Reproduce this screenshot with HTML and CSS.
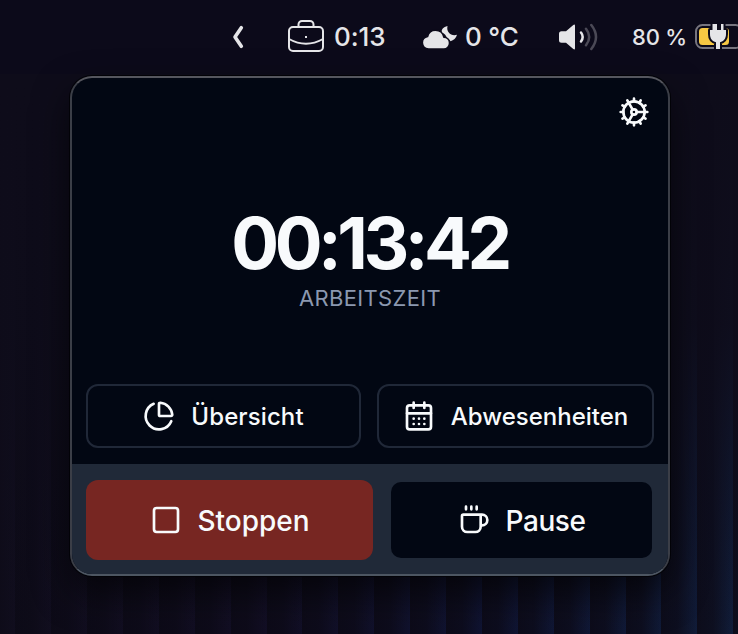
FILE: index.html
```html
<!DOCTYPE html>
<html lang="de">
<head>
<meta charset="utf-8">
<title>Arbeitszeit</title>
<link rel="stylesheet" href="styles.css">
</head>
<body>
<header class="menubar">
  <svg class="chevron" width="12" height="24" viewBox="0 0 12 24"><path d="M9.300 2.700 3 12l6.300 9.300"/></svg>
  <div class="item work">
    <svg class="line" width="38" height="36" viewBox="0 0 38 36"><rect x="2" y="9" width="34" height="24" rx="4"/><path d="M11.500 9V6.500a3.500 3.500 0 0 1 3.500-3.500h8a3.500 3.500 0 0 1 3.500 3.500V9M2 21q17 9.500 34 0"/><rect class="solid" x="18" y="18" width="2" height="2"/></svg>
    <span class="work-text">0:13</span>
  </div>
  <div class="item weather">
    <svg class="fill" width="36" height="26" viewBox="0 0 36 26"><path d="M25.500 2c-4 .8-6.700 3.500-5.500 6.700 2.500.8 4.400 2.800 5 5.700 1.500.4 2.800 1.400 3.500 2.900 3-1 5.700-3.300 6.500-6.600-5.500 1.800-11-2.300-9.500-8.700z"/><path class="cloud" d="M6.500 25a6.300 6.300 0 0 1-.9-12.500C6.500 8.500 9.700 6.200 13.500 6.200c4.300 0 7.500 2.900 8.300 7 3.100-.1 5.700 2.500 5.700 5.700 0 3.300-2.500 6.100-5.700 6.100z"/></svg>
    <span class="weather-text">0 °C</span>
  </div>
  <svg class="speaker" width="42" height="30" viewBox="0 0 42 30"><path class="cone" d="M3.500 9.300H8L15.300 3q1.700-1.200 1.700.8v22.400q0 2-1.700.8L8 20.700H3.500Q1 20.700 1 18.200v-6.400Q1 9.300 3.500 9.300z"/><path d="M23 10.500q3.400 4.500 0 9"/><path class="dim" d="M28 6.800q6.400 8.200 0 16.400M33.300 3q9.400 12 0 24"/></svg>
  <span class="charge">80 %</span>
  <svg class="battery" width="50" height="30" viewBox="0 0 50 30"><rect class="case" x="2" y="3" width="46" height="23" rx="6.500"/><rect class="level" x="5" y="6" width="30" height="17" rx="3.500"/><path class="plug" d="M18.500 2v6h-2.500v4c0 4.700 2.300 7.200 6 8.200V27h4v-6.800c3.700-1 6-3.500 6-8.200V8h-2.500V2h-2.500v6h-4V2z"/></svg>
</header>
<main class="desktop">
  <section class="panel">
    <div class="top">
      <svg class="icon" viewBox="0 0 24 24"><circle cx="12" cy="12" r="8"/><circle cx="12" cy="12" r="2"/><path d="M12 2v2M12 22v-2M17 20.660l-1-1.730M11 10.270 7 3.340M20.660 17l-1.730-1M3.340 7l1.730 1M14 12h8M2 12h2M20.660 7l-1.730 1M3.340 17l1.730-1M17 3.340l-1 1.730M11 13.730l-4 6.930"/></svg>
    </div>
    <div class="timer">
      <div class="time">00:13:42</div>
      <div class="caption">ARBEITSZEIT</div>
    </div>
    <div class="links">
      <button class="btn overview"><svg class="icon" viewBox="0 0 24 24"><path d="M21 12c.552 0 1.005-.449.950-.998a10 10 0 0 0-8.953-8.951c-.550-.055-.998.398-.998.950v8a1 1 0 0 0 1 1z"/><path d="M21.210 15.890A10 10 0 1 1 8 2.830"/></svg><span>Übersicht</span></button>
      <button class="btn absences"><svg class="icon" viewBox="0 0 24 24"><path d="M8 2v4M16 2v4M3 10h18M8 14h.01M12 14h.01M16 14h.01M8 18h.01M12 18h.01M16 18h.01"/><rect x="3" y="4" width="18" height="18" rx="2"/></svg><span>Abwesenheiten</span></button>
    </div>
    <footer class="actions">
      <button class="btn stop"><svg class="icon" viewBox="0 0 24 24"><rect x="3" y="3" width="18" height="18" rx="2"/></svg><span>Stoppen</span></button>
      <button class="btn pause"><svg class="icon" viewBox="0 0 24 24"><path d="M6 2v2M10 2v2M14 2v2M16 8a1 1 0 0 1 1 1v8a4 4 0 0 1-4 4H7a4 4 0 0 1-4-4V9a1 1 0 0 1 1-1h14a4 4 0 1 1 0 8h-1"/></svg><span>Pause</span></button>
    </footer>
  </section>
</main>
</body>
</html>
```
FILE: styles.css
```css
* { box-sizing: border-box; }
body {
  margin: 0;
  width: 738px;
  height: 634px;
  overflow: hidden;
  background: #0d0b1a;
  color: #f8fafc;
  font-family: Inter, "Liberation Sans", sans-serif;
}
svg { display: block; flex: none; fill: none; stroke-linecap: round; stroke-linejoin: round; }
.menubar {
  display: flex;
  align-items: center;
  height: 74px;
  padding-left: 232px;
  background: #0c0a1a;
  color: #e5e5e8;
  font-size: 26px;
  font-weight: 500;
  white-space: nowrap;
}
.item { display: flex; align-items: center; }
.chevron { stroke: #e5e5e8; stroke-width: 3.6; }
.work { margin-left: 43px; gap: 9px; }
.line { stroke: #e5e5e8; stroke-width: 2; margin-top: -3px; }
.solid { fill: #e5e5e8; stroke: none; }
.work-text { width: 52px; padding-bottom: 2px; letter-spacing: -0.1px; }
.weather { margin-left: 36px; gap: 7px; }
.fill { fill: #e5e5e8; }
.cloud { stroke: #0c0a1a; stroke-width: 1.5; }
.weather-text { width: 55px; padding-bottom: 2px; letter-spacing: -0.2px; }
.speaker { margin-left: 38px; stroke: #e5e5e8; stroke-width: 2.5; }
.cone { fill: #e5e5e8; stroke: none; }
.dim { stroke: #4b4956; }
.charge { margin-left: 32px; width: 55px; font-size: 22px; letter-spacing: -0.2px; }
.battery { margin-left: 7px; }
.case { stroke: #77757f; stroke-width: 2; }
.level { fill: #f7c843; }
.plug { fill: #e5e5e8; stroke: #0c0a1a; stroke-width: 4; paint-order: stroke; }
.desktop {
  height: 560px;
  padding: 2px 68px 58px 70px;
  background:
    linear-gradient(180deg, #0e0c1a 0, rgba(14, 12, 26, .9) 250px, rgba(14, 12, 26, 0) 560px),
    repeating-linear-gradient(90deg, rgba(12, 10, 22, .88) 0, rgba(12, 10, 22, .75) 16px, rgba(12, 10, 22, .1) 35.9px) -20.7px 0 / 780px 100%,
    linear-gradient(90deg, #110e1e 0, #130f26 35%, #101536 65%, #11203f 100%);
}
.panel {
  display: flex;
  flex-direction: column;
  width: 600px;
  height: 500px;
  border: 2px solid #3b3e47;
  border-top-color: #55565e;
  border-bottom-color: #4d5662;
  border-radius: 22px;
  overflow: hidden;
  background: #020713;
  box-shadow: 0 0 0 1px #020207, 0 16px 36px rgba(0, 0, 0, .6);
}
.icon { width: 32px; height: 32px; stroke: #f8fafc; stroke-width: 2; }
.top { display: flex; justify-content: flex-end; height: 50px; padding: 18px 18px 0; }
.timer { flex: 1; padding-top: 72px; text-align: center; }
.time { height: 86px; line-height: 86px; padding-right: 1px; font-size: 71px; font-weight: 680; letter-spacing: -4.5px; }
.caption { height: 28px; margin-top: -2px; line-height: 28px; font-size: 22px; color: #8b98b0; letter-spacing: .35px; }
.links { display: flex; gap: 16px; padding: 0 14px 16px; }
.btn {
  display: flex;
  align-items: center;
  justify-content: center;
  gap: 16px;
  padding: 0;
  border: 0;
  border-radius: 12px;
  color: #f8fafc;
  background: #020713;
  font-family: inherit;
  font-weight: 500;
  white-space: nowrap;
}
.links .btn { height: 64px; border: 2px solid #202838; font-size: 24px; }
.overview { width: 275px; }
.overview span { letter-spacing: .1px; }
.absences { width: 277px; }
.actions {
  display: flex;
  align-items: center;
  gap: 18px;
  height: 110px;
  padding: 2px 14px 0;
  background: #202938;
}
.actions .btn { gap: 15px; padding-left: 1px; font-size: 28px; }
.actions .stop { width: 287px; height: 80px; background: #772622; }
.actions .pause { width: 261px; height: 76px; border-radius: 10px; }
.actions span { padding-top: 1px; }
.pause span { letter-spacing: -0.4px; }
```
